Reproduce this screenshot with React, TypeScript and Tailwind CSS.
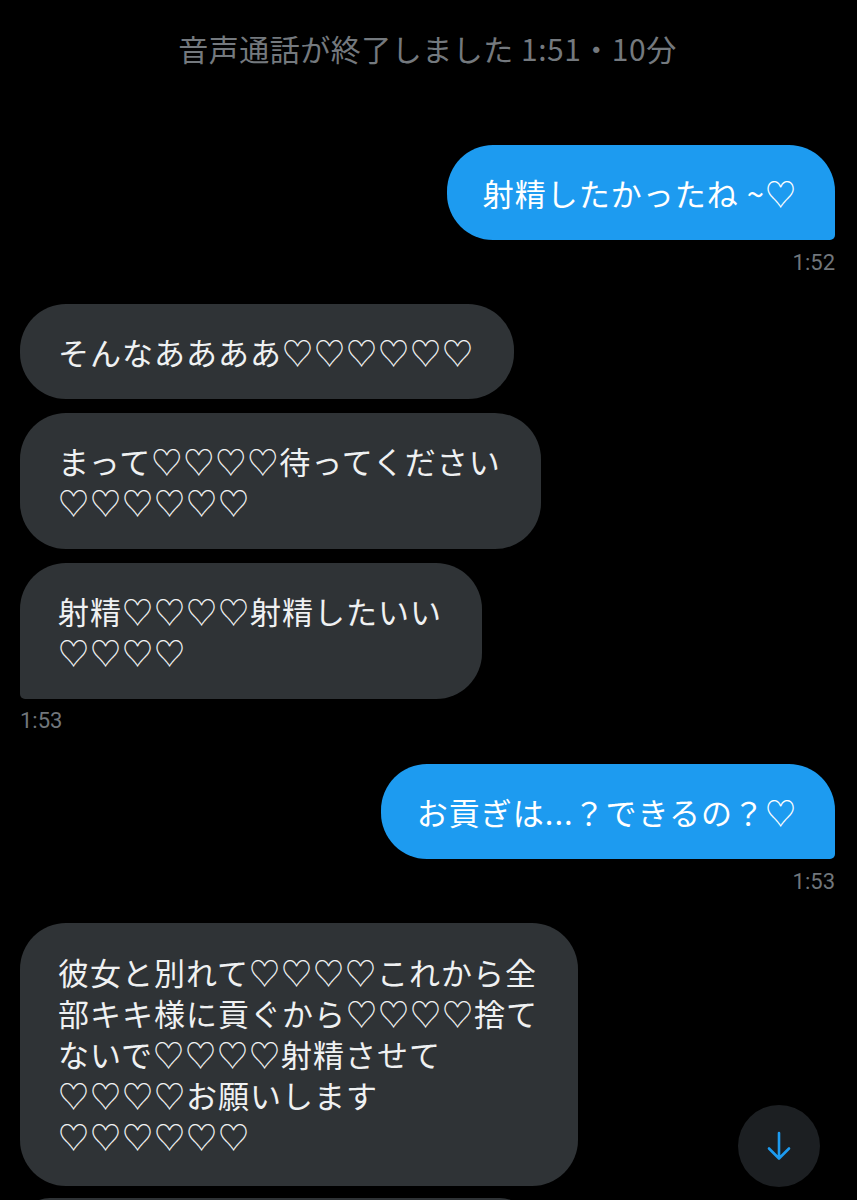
import React from "react";

const jp = { fontFamily: '"Noto Sans CJK JP", "Noto Sans", sans-serif' };
const latin = { fontFamily: 'Roboto, "Liberation Sans", sans-serif' };

function Sent({ children }: { children: React.ReactNode }) {
  return (
    <div className="flex justify-end">
      <div
        className="bg-[#1d9bf0] text-white text-[31px] tracking-[1px] leading-[41px] py-[27px] pl-[36px] pr-[38px] rounded-[46px] rounded-br-[5px] whitespace-nowrap"
        style={jp}
      >
        {children}
      </div>
    </div>
  );
}

function Received({
  lines,
  last,
}: {
  lines: string[];
  last?: boolean;
}) {
  return (
    <div className="flex justify-start">
      <div
        className={
          "bg-[#2f3336] text-[#eff1f2] text-[31px] tracking-[1px] leading-[41px] py-[27px] pl-[38px] pr-[40px] rounded-[46px] whitespace-nowrap " +
          (last ? "rounded-bl-[5px]" : "")
        }
        style={jp}
      >
        {lines.map((l, i) => (
          <div key={i}>{l}</div>
        ))}
      </div>
    </div>
  );
}

function Time({ children, right }: { children: React.ReactNode; right?: boolean }) {
  return (
    <div
      className={
        "text-[22px] leading-[26px] text-[#71767b] " + (right ? "text-right" : "text-left")
      }
      style={latin}
    >
      {children}
    </div>
  );
}

export default function App() {
  return (
    <div className="relative w-[857px] h-[1200px] bg-black overflow-hidden">
      <div className="flex flex-col pl-[20px] pr-[22px]">
        <div
          className="pt-[29px] h-[66px] text-center text-[30px] tracking-[0.5px] leading-[38px] text-[#74797e]"
          style={jp}
        >
          音声通話が終了しました 1:51・10分
        </div>

        <div className="mt-[79px]">
          <Sent>射精したかったね ~♡</Sent>
        </div>
        <div className="mt-[10px]">
          <Time right>1:52</Time>
        </div>

        <div className="mt-[28px] flex flex-col gap-[14px]">
          <Received lines={["そんなああああ♡♡♡♡♡♡"]} />
          <Received lines={["まって♡♡♡♡待ってください", "♡♡♡♡♡♡"]} />
          <Received lines={["射精♡♡♡♡射精したいい", "♡♡♡♡"]} last />
        </div>
        <div className="mt-[9px]">
          <Time>1:53</Time>
        </div>

        <div className="mt-[30px]">
          <Sent>お貢ぎは...？できるの？♡</Sent>
        </div>
        <div className="mt-[10px]">
          <Time right>1:53</Time>
        </div>

        <div className="mt-[28px] flex flex-col gap-[12px]">
          <div className="flex justify-start">
            <div
              className="bg-[#2f3336] text-[#eff1f2] text-[31px] tracking-[1px] leading-[41px] pt-[28px] pb-[30px] pl-[38px] pr-[40px] rounded-[46px] whitespace-nowrap"
              style={jp}
            >
              <div>彼女と別れて♡♡♡♡これから全</div>
              <div>部キキ様に貢ぐから♡♡♡♡捨て</div>
              <div>ないで♡♡♡♡射精させて</div>
              <div>♡♡♡♡お願いします</div>
              <div>♡♡♡♡♡♡</div>
            </div>
          </div>
          <div className="flex justify-start">
            <div className="w-[510px] h-[60px] bg-[#2f3336] rounded-[46px]" />
          </div>
        </div>
      </div>

      <div className="absolute left-[738px] top-[1105px] w-[82px] h-[82px] rounded-full bg-[#1c1f22] flex items-center justify-center">
        <svg width="30" height="32" viewBox="0 0 30 32" fill="none">
          <path
            d="M15 3 V28 M5 18.5 L15 28.5 L25 18.5"
            stroke="#1d9bf0"
            strokeWidth="2.6"
            strokeLinecap="round"
            strokeLinejoin="round"
          />
        </svg>
      </div>
    </div>
  );
}
